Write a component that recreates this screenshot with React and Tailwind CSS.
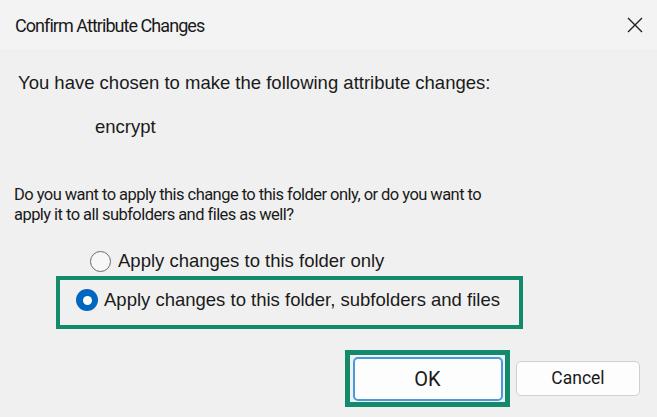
import React, { useState } from "react";

function Radio({ checked }) {
  if (checked) {
    return (
      <span className="w-[22px] h-[22px] rounded-full bg-[#0067c0] flex items-center justify-center shrink-0">
        <span className="w-[9px] h-[9px] rounded-full bg-white"></span>
      </span>
    );
  }
  return (
    <span className="w-[21px] h-[21px] rounded-full border-[1.5px] border-[#6b6b6b] bg-[#f7f7f7] shrink-0"></span>
  );
}

function App() {
  const [all, setAll] = useState(true);

  return (
    <div
      className="w-[657px] h-[417px] bg-[#f0f0f0] text-[#1a1a1a] flex flex-col overflow-hidden"
      style={{ fontFamily: '"Liberation Sans", Arial, sans-serif' }}
    >
      {/* title bar */}
      <div className="h-[49px] shrink-0 bg-[#f3f3f3] flex items-center justify-between pl-[15px] pr-[14px]">
        <span
          className="text-[18px] tracking-[-0.95px] leading-[22px] pt-[2px]"
          style={{ fontFamily: 'Roboto, "Liberation Sans", sans-serif' }}
        >
          Confirm Attribute Changes
        </span>
        <svg width="16" height="16" viewBox="0 0 16 16" className="mt-[1px]">
          <path
            d="M1 1 L15 15 M15 1 L1 15"
            stroke="#1f1f1f"
            strokeWidth="1.4"
            fill="none"
          />
        </svg>
      </div>

      {/* body */}
      <div className="flex flex-col">
        <p className="mt-[23px] ml-[18px] text-[18.5px] leading-[22px]">
          You have chosen to make the following attribute changes:
        </p>
        <p className="mt-[22px] ml-[95px] text-[18.5px] leading-[22px]">
          encrypt
        </p>
        <p
          className="mt-[47px] ml-[14px] text-[16.5px] tracking-[-0.55px] leading-[20px] whitespace-nowrap"
          style={{ fontFamily: 'Roboto, "Liberation Sans", sans-serif' }}
        >
          Do you want to apply this change to this folder only, or do you want to
          <br />
          apply it to all subfolders and files as well?
        </p>

        <div
          className="mt-[25px] ml-[90px] flex items-center gap-[7px] cursor-pointer"
          onClick={() => setAll(false)}
        >
          <Radio checked={!all} />
          <span className="text-[18.5px] leading-[22px]">
            Apply changes to this folder only
          </span>
        </div>

        <div className="mt-[4px] ml-[56px] w-[467px] h-[53px] border-[4px] border-[#138a6b] pt-[9px] pl-[16px]">
          <div
            className="flex items-center gap-[6px] cursor-pointer"
            onClick={() => setAll(true)}
          >
            <Radio checked={all} />
            <span className="text-[18.5px] leading-[22px]">
              Apply changes to this folder, subfolders and files
            </span>
          </div>
        </div>

        {/* buttons */}
        <div className="mt-[21px] flex items-center justify-end gap-[6px] pr-[17px]">
          <div className="w-[165px] h-[57px] border-[5px] border-[#138a6b] p-[2px] flex items-center justify-center">
            <button
              className="w-[150px] h-[44px] rounded-[5px] border-2 border-[#4a98df] bg-[#fdfdfd] text-[20px] text-[#1a1a1a]"
              style={{ fontFamily: 'Roboto, "Liberation Sans", sans-serif' }}
            >
              OK
            </button>
          </div>
          <button
            className="w-[124px] h-[35px] rounded-[5px] border border-[#d0d0d0] bg-[#fdfdfd] text-[17.5px] text-[#1a1a1a]"
            style={{ fontFamily: 'Roboto, "Liberation Sans", sans-serif' }}
          >
            Cancel
          </button>
        </div>
      </div>
    </div>
  );
}

export default App;
